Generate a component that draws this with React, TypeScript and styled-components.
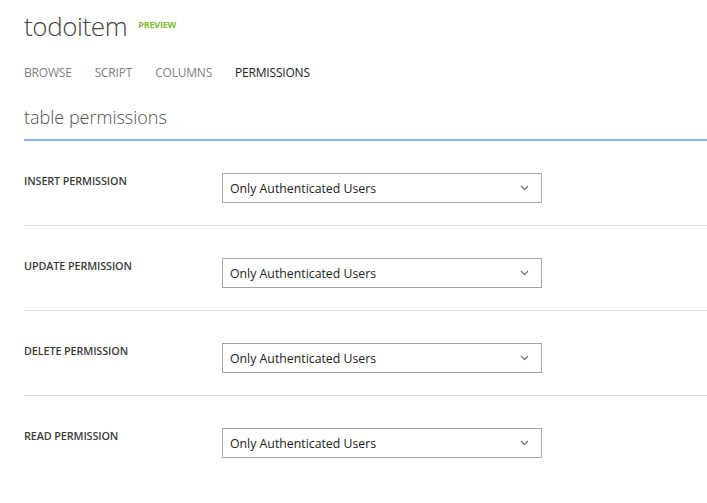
import React from 'react';
import styled, { createGlobalStyle } from 'styled-components';

const GlobalStyle = createGlobalStyle`
  html, body {
    margin: 0;
    padding: 0;
    background: #fff;
  }
  body {
    font-family: "Open Sans", "Liberation Sans", sans-serif;
    color: #333;
  }
`;

const Page = styled.div`
  padding: 8px 0 0 24px;
`;

const TitleRow = styled.div`
  display: flex;
  align-items: baseline;
  gap: 11px;
  height: 40px;
`;

const Title = styled.h1`
  margin: 0;
  font-size: 26px;
  font-weight: 300;
  color: #444;
  letter-spacing: -0.4px;
`;

const Badge = styled.span`
  font-size: 9px;
  font-weight: 700;
  color: #7cbb29;
  letter-spacing: -0.2px;
  position: relative;
  top: -8px;
`;

const Tabs = styled.nav`
  display: flex;
  gap: 23px;
  margin-top: 16px;
  height: 16px;
`;

const Tab = styled.a<{ $active?: boolean }>`
  font-size: 12px;
  color: ${p => (p.$active ? '#222' : '#808080')};
  text-decoration: none;
  letter-spacing: -0.2px;
`;

const Section = styled.h2`
  margin: 25px 0 0;
  font-size: 18px;
  font-weight: 300;
  color: #505050;
  padding-bottom: 10px;
  border-bottom: 2px solid #8ab8e1;
`;

const List = styled.div`
  display: flex;
  flex-direction: column;
`;

const Row = styled.div<{ $last?: boolean }>`
  display: flex;
  align-items: flex-start;
  height: 85px;
  box-sizing: border-box;
  padding-top: 32px;
  border-bottom: ${p => (p.$last ? 'none' : '1px solid #dcdcdc')};
`;

const Label = styled.div`
  width: 198px;
  font-size: 10.8px;
  font-weight: 600;
  color: #3c3c3c;
  letter-spacing: -0.1px;
`;

const Select = styled.div`
  width: 320px;
  height: 30px;
  box-sizing: border-box;
  border: 1px solid #a6a6a6;
  display: flex;
  align-items: center;
  justify-content: space-between;
  padding: 0 12px 0 7px;
  font-size: 12.3px;
  color: #222;
`;

const Chevron = () => (
  <svg width="9" height="6" viewBox="0 0 9 6">
    <path d="M1 1 L4.5 4.5 L8 1" fill="none" stroke="#777" strokeWidth="1.3" />
  </svg>
);

const rows = ['INSERT PERMISSION', 'UPDATE PERMISSION', 'DELETE PERMISSION', 'READ PERMISSION'];

export default function App() {
  return (
    <>
      <GlobalStyle />
      <Page>
        <TitleRow>
          <Title>todoitem</Title>
          <Badge>PREVIEW</Badge>
        </TitleRow>
        <Tabs>
          <Tab>BROWSE</Tab>
          <Tab>SCRIPT</Tab>
          <Tab>COLUMNS</Tab>
          <Tab $active>PERMISSIONS</Tab>
        </Tabs>
        <Section>table permissions</Section>
        <List>
          {rows.map((r, i) => (
            <Row key={r} $last={i === rows.length - 1}>
              <Label>{r}</Label>
              <Select>
                Only Authenticated Users
                <Chevron />
              </Select>
            </Row>
          ))}
        </List>
      </Page>
    </>
  );
}
